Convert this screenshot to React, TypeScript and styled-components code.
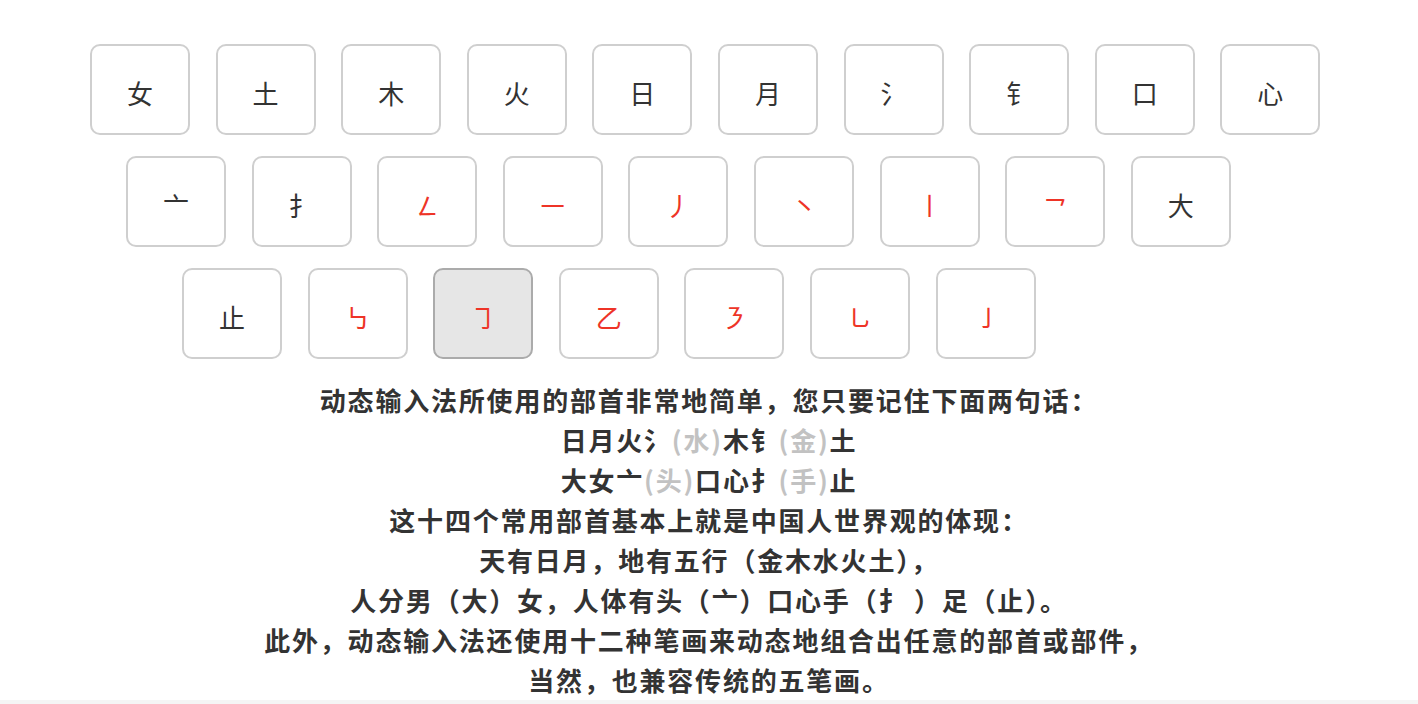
import React from "react";
import styled, { createGlobalStyle } from "styled-components";

const GlobalStyle = createGlobalStyle`
  html, body {
    margin: 0;
    padding: 0;
    background: #ffffff;
  }
  body {
    font-family: "Noto Sans CJK SC", "Noto Sans", sans-serif;
    color: #333333;
  }
`;

const Page = styled.div`
  display: flex;
  flex-direction: column;
  padding-top: 44px;
`;

const Keyboard = styled.div`
  display: flex;
  flex-direction: column;
  gap: 21px;
`;

const Row = styled.div<{ $indent: number }>`
  display: flex;
  gap: 25.6px;
  padding-left: ${(p) => p.$indent}px;
`;

const Key = styled.div<{ $stroke?: boolean; $active?: boolean }>`
  box-sizing: border-box;
  width: 100px;
  height: 91px;
  border: 2px solid ${(p) => (p.$active ? "#ababab" : "#cfcfcf")};
  border-radius: 10px;
  background: ${(p) => (p.$active ? "#e6e6e6" : "#ffffff")};
  display: flex;
  align-items: center;
  justify-content: center;
  padding-top: 6px;
  font-family: "Noto Sans CJK SC", sans-serif;
  font-size: 26px;
  font-weight: 400;
  color: ${(p) => (p.$stroke ? "#ee3427" : "#333333")};
`;

const Intro = styled.div`
  margin-top: 21px;
  display: flex;
  flex-direction: column;
  align-items: center;
  font-family: "Noto Sans CJK SC", sans-serif;
  font-size: 26px;
  font-weight: 700;
  letter-spacing: 1.8px;
  line-height: 40px;
  color: #333333;
`;

const Line = styled.div`
  text-align: center;
  white-space: nowrap;
`;

const Hint = styled.span`
  color: #c2c2c2;
`;

const Footer = styled.div`
  height: 40px;
  background: #f5f5f5;
`;

type K = { c: string; s?: boolean; a?: boolean };

const rows: { indent: number; keys: K[] }[] = [
  {
    indent: 90,
    keys: [
      { c: "女" },
      { c: "土" },
      { c: "木" },
      { c: "火" },
      { c: "日" },
      { c: "月" },
      { c: "氵" },
      { c: "钅" },
      { c: "口" },
      { c: "心" },
    ],
  },
  {
    indent: 126,
    keys: [
      { c: "亠" },
      { c: "扌" },
      { c: "㇜", s: true },
      { c: "㇐", s: true },
      { c: "丿", s: true },
      { c: "㇔", s: true },
      { c: "㇑", s: true },
      { c: "㇖", s: true },
      { c: "大" },
    ],
  },
  {
    indent: 182,
    keys: [
      { c: "止" },
      { c: "㇉", s: true },
      { c: "㇆", s: true, a: true },
      { c: "乙", s: true },
      { c: "㇋", s: true },
      { c: "㇟", s: true },
      { c: "㇚", s: true },
    ],
  },
];

export default function App() {
  return (
    <>
      <GlobalStyle />
      <Page>
        <Keyboard>
          {rows.map((r, i) => (
            <Row key={i} $indent={r.indent}>
              {r.keys.map((k, j) => (
                <Key key={j} $stroke={k.s} $active={k.a}>
                  {k.c}
                </Key>
              ))}
            </Row>
          ))}
        </Keyboard>
        <Intro>
          <Line>动态输入法所使用的部首非常地简单，您只要记住下面两句话：</Line>
          <Line>
            日月火氵<Hint>(水)</Hint>木钅<Hint>(金)</Hint>土
          </Line>
          <Line>
            大女亠<Hint>(头)</Hint>口心扌<Hint>(手)</Hint>止
          </Line>
          <Line>这十四个常用部首基本上就是中国人世界观的体现：</Line>
          <Line>天有日月，地有五行（金木水火土），</Line>
          <Line>人分男（大）女，人体有头（亠）口心手（扌 ）足（止）。</Line>
          <Line>此外，动态输入法还使用十二种笔画来动态地组合出任意的部首或部件，</Line>
          <Line>当然，也兼容传统的五笔画。</Line>
        </Intro>
        <Footer />
      </Page>
    </>
  );
}
